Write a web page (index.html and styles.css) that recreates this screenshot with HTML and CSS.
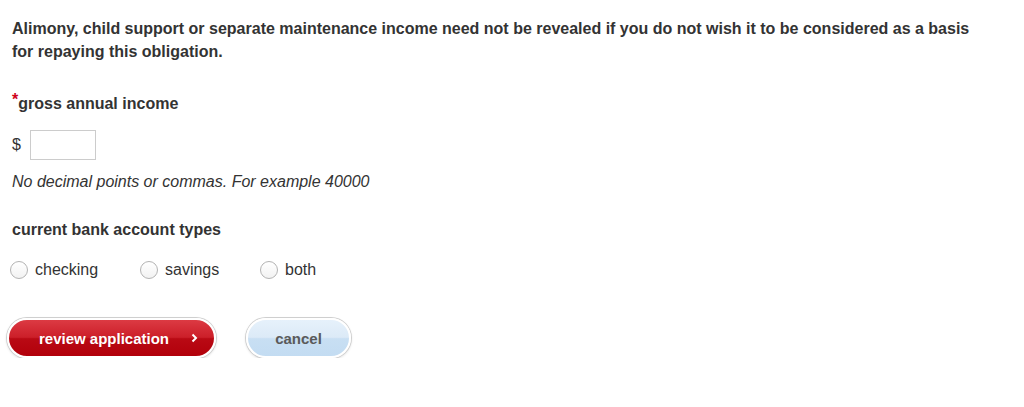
FILE: index.html
```html
<!DOCTYPE html>
<html lang="en">
<head>
    <meta charset="UTF-8">
    <title>Income details</title>
    <link rel="stylesheet" href="styles.css">
</head>
<body>
    <form class="income-form">
        <p class="notice">Alimony, child support or separate maintenance income need not be revealed if you do not wish it to be considered as a basis for repaying this obligation.</p>

        <div class="field field-income">
            <label class="field-label" for="income"><span class="required">*</span>gross annual income</label>
            <div class="money-row">
                <span class="currency">$</span>
                <input type="text" id="income" class="money-input">
            </div>
            <p class="hint">No decimal points or commas. For example 40000</p>
        </div>

        <div class="field field-accounts">
            <span class="field-label">current bank account types</span>
            <div class="radio-row">
                <label class="radio-option radio-checking"><span class="radio"></span>checking</label>
                <label class="radio-option radio-savings"><span class="radio"></span>savings</label>
                <label class="radio-option"><span class="radio"></span>both</label>
            </div>
        </div>

        <div class="actions">
            <button type="button" class="btn btn-primary">review application
                <svg class="chevron" width="7" height="10" viewBox="0 0 7 10"><polyline points="1.5,1.5 5,5 1.5,8.5" fill="none" stroke="#fff" stroke-width="2"/></svg>
            </button>
            <button type="button" class="btn btn-cancel">cancel</button>
        </div>
    </form>
</body>
</html>
```

FILE: styles.css
```css
body {
    margin: 0;
    background: #fff;
    font-family: "Liberation Sans", Arial, sans-serif;
    color: #333;
}

.income-form {
    padding: 17px 12px 0 12px;
}

.notice {
    margin: 0;
    width: 960px;
    font-size: 16px;
    font-weight: bold;
    line-height: 23px;
}

.field-income {
    margin-top: 31px;
}

.field-accounts {
    margin-top: 28px;
}

.field-label {
    display: block;
    font-size: 16px;
    font-weight: bold;
    line-height: 20px;
}

.required {
    color: #d0021b;
    position: relative;
    top: -4px;
}

.money-row {
    display: flex;
    align-items: center;
    margin-top: 16px;
}

.currency {
    font-size: 16px;
    width: 18px;
}

.money-input {
    width: 66px;
    height: 30px;
    box-sizing: border-box;
    border: 1px solid #ccc;
    margin: 0;
}

.hint {
    margin: 12px 0 0 0;
    font-size: 16px;
    font-style: italic;
    line-height: 20px;
}

.radio-row {
    display: flex;
    margin-top: 20px;
    margin-left: -2px;
}

.radio-option {
    display: flex;
    align-items: center;
    font-size: 16px;
    line-height: 20px;
}

.radio-checking {
    width: 130px;
}

.radio-savings {
    width: 120px;
}

.radio {
    width: 16px;
    height: 16px;
    border: 1px solid #b3b3b3;
    border-radius: 50%;
    background: linear-gradient(#fff, #f2f2f2);
    margin-right: 7px;
}

.actions {
    display: flex;
    gap: 30px;
    margin-top: 38px;
    margin-left: -5px;
}

.btn {
    display: flex;
    align-items: center;
    justify-content: center;
    height: 40px;
    border-radius: 20px;
    border: 2px solid #fff;
    box-shadow: 0 0 0 1px #cfcfcf, 0 1px 3px rgba(0, 0, 0, 0.2);
    font-family: "Liberation Sans", Arial, sans-serif;
    font-size: 15px;
    font-weight: bold;
    cursor: pointer;
    padding: 0;
}

.btn-primary {
    width: 209px;
    color: #fff;
    padding-left: 14px;
    background: linear-gradient(#dc3a43 0%, #cc1f29 48%, #b90a14 52%, #b2000b 100%);
}

.chevron {
    margin-left: 22px;
}

.btn-cancel {
    width: 105px;
    color: #5a5a5a;
    background: linear-gradient(#e6f1fb 0%, #dceaf7 48%, #c8dff3 52%, #c3dcf2 100%);
}
```
